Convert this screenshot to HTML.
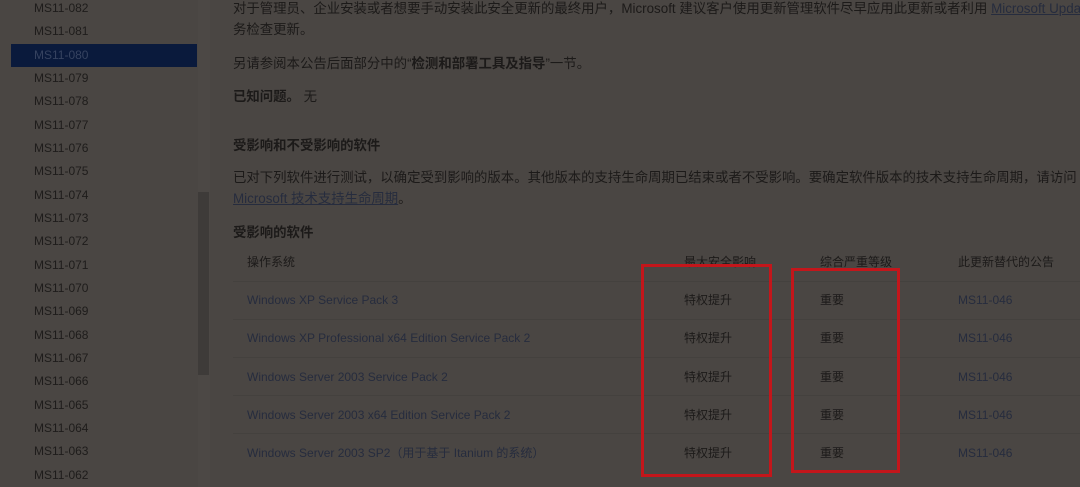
<!DOCTYPE html>
<html><head><meta charset="utf-8"><style>
*{margin:0;padding:0;box-sizing:border-box}
body{width:1080px;height:487px;overflow:hidden;background:#4a4643;font-family:"Liberation Sans","Noto Sans CJK SC",sans-serif;color:#1c1a19;position:relative}
.a{position:absolute;white-space:nowrap;line-height:1}
.s{left:34px;font-size:12px;color:#1e1c1b}
.t{font-size:13.4px}
.b{font-weight:bold}
.l{color:#262c3e}
.u{text-decoration:underline}
.hr{position:absolute;left:233px;width:847px;height:1px;background:#44413e}
.box{position:absolute;border:3px solid #c3161b}
</style></head><body>
<div class="a" style="left:198px;top:0;width:12px;height:487px;background:#4c4845"></div>
<div class="a" style="left:198px;top:192px;width:11px;height:183px;background:#3e3b39"></div>
<div class="a" style="left:11px;top:44px;width:186px;height:23px;background:#0a1a3c"></div>
<div class="a s" style="top:2px">MS11-082</div>
<div class="a s" style="top:25px">MS11-081</div>
<div class="a s" style="top:49px;color:#364360">MS11-080</div>
<div class="a s" style="top:72px">MS11-079</div>
<div class="a s" style="top:95px">MS11-078</div>
<div class="a s" style="top:119px">MS11-077</div>
<div class="a s" style="top:142px">MS11-076</div>
<div class="a s" style="top:165px">MS11-075</div>
<div class="a s" style="top:189px">MS11-074</div>
<div class="a s" style="top:212px">MS11-073</div>
<div class="a s" style="top:235px">MS11-072</div>
<div class="a s" style="top:259px">MS11-071</div>
<div class="a s" style="top:282px">MS11-070</div>
<div class="a s" style="top:305px">MS11-069</div>
<div class="a s" style="top:329px">MS11-068</div>
<div class="a s" style="top:352px">MS11-067</div>
<div class="a s" style="top:375px">MS11-066</div>
<div class="a s" style="top:399px">MS11-065</div>
<div class="a s" style="top:422px">MS11-064</div>
<div class="a s" style="top:445px">MS11-063</div>
<div class="a s" style="top:469px">MS11-062</div>

<div class="a t" style="left:233px;top:2px">对于管理员、企业安装或者想要手动安装此安全更新的最终用户，Microsoft 建议客户使用更新管理软件尽早应用此更新或者利用 <span class="l u">Microsoft Update</span></div>
<div class="a t" style="left:233px;top:23px">务检查更新。</div>
<div class="a t" style="left:233px;top:57px">另请参阅本公告后面部分中的“<b>检测和部署工具及指导</b>”一节。</div>
<div class="a t" style="left:233px;top:90px"><b>已知问题。</b> 无</div>
<div class="a t b" style="left:233px;top:139px">受影响和不受影响的软件</div>
<div class="a t" style="left:233px;top:171px">已对下列软件进行测试，以确定受到影响的版本。其他版本的支持生命周期已结束或者不受影响。要确定软件版本的技术支持生命周期，请访问</div>
<div class="a t" style="left:233px;top:192px"><span class="l u">Microsoft 技术支持生命周期</span>。</div>
<div class="a t b" style="left:233px;top:226px">受影响的软件</div>

<div class="a" style="left:247px;top:256px;font-size:12px">操作系统</div>
<div class="a" style="left:684px;top:256px;font-size:12px">最大安全影响</div>
<div class="a" style="left:820px;top:256px;font-size:12px">综合严重等级</div>
<div class="a" style="left:958px;top:256px;font-size:12px">此更新替代的公告</div>
<div class="hr" style="top:281px"></div>
<div class="hr" style="top:319px"></div>
<div class="hr" style="top:357px"></div>
<div class="hr" style="top:395px"></div>
<div class="hr" style="top:433px"></div>

<div class="a l" style="left:247px;top:294px;font-size:12px">Windows XP Service Pack 3</div>
<div class="a l" style="left:247px;top:332px;font-size:12px">Windows XP Professional x64 Edition Service Pack 2</div>
<div class="a l" style="left:247px;top:371px;font-size:12px">Windows Server 2003 Service Pack 2</div>
<div class="a l" style="left:247px;top:409px;font-size:12px">Windows Server 2003 x64 Edition Service Pack 2</div>
<div class="a l" style="left:247px;top:447px;font-size:12px">Windows Server 2003 SP2（用于基于 Itanium 的系统）</div>

<div class="a" style="left:684px;top:294px;font-size:12px">特权提升</div>
<div class="a" style="left:684px;top:332px;font-size:12px">特权提升</div>
<div class="a" style="left:684px;top:371px;font-size:12px">特权提升</div>
<div class="a" style="left:684px;top:409px;font-size:12px">特权提升</div>
<div class="a" style="left:684px;top:447px;font-size:12px">特权提升</div>
<div class="a" style="left:820px;top:294px;font-size:12px">重要</div>
<div class="a" style="left:820px;top:332px;font-size:12px">重要</div>
<div class="a" style="left:820px;top:371px;font-size:12px">重要</div>
<div class="a" style="left:820px;top:409px;font-size:12px">重要</div>
<div class="a" style="left:820px;top:447px;font-size:12px">重要</div>
<div class="a l" style="left:958px;top:294px;font-size:12px">MS11-046</div>
<div class="a l" style="left:958px;top:332px;font-size:12px">MS11-046</div>
<div class="a l" style="left:958px;top:371px;font-size:12px">MS11-046</div>
<div class="a l" style="left:958px;top:409px;font-size:12px">MS11-046</div>
<div class="a l" style="left:958px;top:447px;font-size:12px">MS11-046</div>

<div class="box" style="left:641px;top:264px;width:131px;height:213px"></div>
<div class="box" style="left:791px;top:268px;width:109px;height:205px"></div>
</body></html>
